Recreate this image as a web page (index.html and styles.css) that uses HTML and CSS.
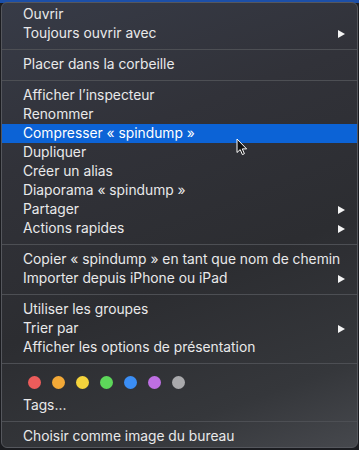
FILE: index.html
```html
<!DOCTYPE html>
<html lang="fr">
<head>
<meta charset="utf-8">
<link rel="stylesheet" href="styles.css">
</head>
<body>
<div class="menu">
  <div class="item">Ouvrir</div>
  <div class="item sub">Toujours ouvrir avec<span class="arrow"></span></div>
  <div class="sep"></div>
  <div class="item">Placer dans la corbeille</div>
  <div class="sep"></div>
  <div class="item">Afficher l’inspecteur</div>
  <div class="item">Renommer</div>
  <div class="item active">Compresser « spindump »</div>
  <div class="item">Dupliquer</div>
  <div class="item">Créer un alias</div>
  <div class="item">Diaporama « spindump »</div>
  <div class="item sub">Partager<span class="arrow"></span></div>
  <div class="item sub">Actions rapides<span class="arrow"></span></div>
  <div class="sep"></div>
  <div class="item">Copier « spindump » en tant que nom de chemin</div>
  <div class="item sub">Importer depuis iPhone ou iPad<span class="arrow"></span></div>
  <div class="sep"></div>
  <div class="item">Utiliser les groupes</div>
  <div class="item sub">Trier par<span class="arrow"></span></div>
  <div class="item">Afficher les options de présentation</div>
  <div class="sep"></div>
  <div class="tags">
    <span class="dot red"></span>
    <span class="dot orange"></span>
    <span class="dot yellow"></span>
    <span class="dot green"></span>
    <span class="dot blue"></span>
    <span class="dot purple"></span>
    <span class="dot gray"></span>
  </div>
  <div class="item tagsitem">Tags…</div>
  <div class="sep"></div>
  <div class="item">Choisir comme image du bureau</div>
  <svg class="cursor" width="12" height="18" viewBox="0 0 12 18">
    <path d="M1 1 L1 14.5 L4.2 11.6 L6.4 16.6 L8.4 15.7 L6.3 10.9 L10.6 10.9 Z" fill="#111" stroke="#fff" stroke-width="1" stroke-linejoin="round"/>
  </svg>
</div>
</body>
</html>
```

FILE: styles.css
```css
html, body {
  margin: 0;
  padding: 0;
}
body {
  width: 359px;
  height: 450px;
  overflow: hidden;
  background: linear-gradient(180deg, #1c4fa8 0px, #1c4fa8 3px, #1b1c20 3px, #1b1c20 100%);
  font-family: Inter, "Liberation Sans", Arial, sans-serif;
}
.menu {
  position: relative;
  box-sizing: border-box;
  margin: 2px 0 0 1px;
  width: 357px;
  height: 446px;
  border: 1px solid #55575d;
  border-radius: 6px;
  background: linear-gradient(160deg, #373b47 0%, #313239 30%, #2c2d31 60%, #35373b 85%, #46484d 100%);
  padding-top: 2px;
  display: flex;
  flex-direction: column;
  color: #e9e9ea;
  font-size: 13.8px;
}
.item {
  height: 19px;
  line-height: 19px;
  padding: 0 12px 0 21px;
  display: flex;
  align-items: center;
  justify-content: space-between;
  white-space: nowrap;
}
.item.active {
  background: #0c63d6;
  color: #fff;
}
.tagsitem {
  margin-top: 2px;
}
.arrow {
  width: 0;
  height: 0;
  border-top: 4.5px solid transparent;
  border-bottom: 4.5px solid transparent;
  border-left: 7px solid #f4f4f4;
}
.sep {
  height: 1px;
  background: #4d4f54;
  margin: 6px 0 5px;
}
.tags {
  height: 24px;
  display: flex;
  align-items: center;
  gap: 11px;
  padding-left: 26px;
  margin-top: 1px;
}
.dot {
  width: 13px;
  height: 13px;
  border-radius: 50%;
}
.red { background: #ec5c5b; }
.orange { background: #f3a937; }
.yellow { background: #f5d43c; }
.green { background: #5dd75a; }
.blue { background: #3b8ef5; }
.purple { background: #be6fe3; }
.gray { background: #a9a9ac; }
.cursor {
  position: absolute;
  left: 234px;
  top: 135px;
}
```
